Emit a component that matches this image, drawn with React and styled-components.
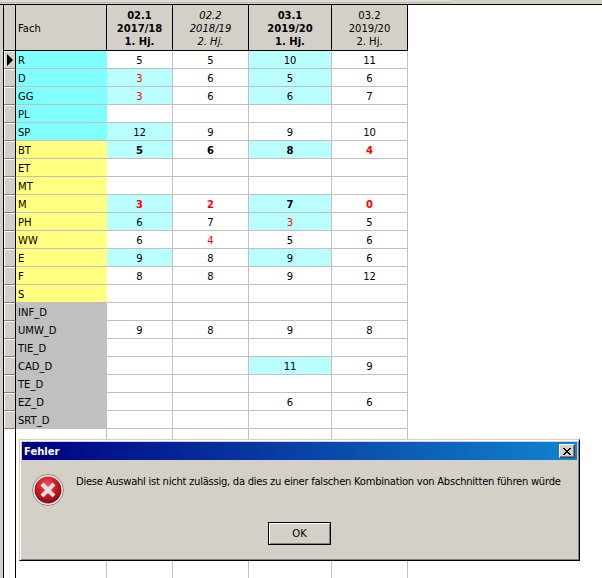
import React from 'react';
import styled, { createGlobalStyle, css } from 'styled-components';

const COLUMNS = '12px 91px 66px 76px 83px 76px';

const HEADERS = [
  { lines: ['02.1', '2017/18', '1. Hj.'], look: 'bold' },
  { lines: ['02.2', '2018/19', '2. Hj.'], look: 'italic' },
  { lines: ['03.1', '2019/20', '1. Hj.'], look: 'bold' },
  { lines: ['03.2', '2019/20', '2. Hj.'], look: 'plain' },
];

// v: value, h: highlighted, r: red, b: bold
const ROWS = [
  { name: 'R', group: 'cyan', cells: [{ v: 5 }, { v: 5 }, { v: 10, h: 1 }, { v: 11 }] },
  { name: 'D', group: 'cyan', cells: [{ v: 3, h: 1, r: 1 }, { v: 6 }, { v: 5, h: 1 }, { v: 6 }] },
  { name: 'GG', group: 'cyan', cells: [{ v: 3, h: 1, r: 1 }, { v: 6 }, { v: 6, h: 1 }, { v: 7 }] },
  { name: 'PL', group: 'cyan', cells: [{}, {}, {}, {}] },
  { name: 'SP', group: 'cyan', cells: [{ v: 12, h: 1 }, { v: 9 }, { v: 9 }, { v: 10 }] },
  { name: 'BT', group: 'yellow', cells: [{ v: 5, h: 1, b: 1 }, { v: 6, b: 1 }, { v: 8, h: 1, b: 1 }, { v: 4, r: 1, b: 1 }] },
  { name: 'ET', group: 'yellow', cells: [{}, {}, {}, {}] },
  { name: 'MT', group: 'yellow', cells: [{}, {}, {}, {}] },
  { name: 'M', group: 'yellow', cells: [{ v: 3, h: 1, r: 1, b: 1 }, { v: 2, r: 1, b: 1 }, { v: 7, h: 1, b: 1 }, { v: 0, r: 1, b: 1 }] },
  { name: 'PH', group: 'yellow', cells: [{ v: 6, h: 1 }, { v: 7 }, { v: 3, h: 1, r: 1 }, { v: 5 }] },
  { name: 'WW', group: 'yellow', cells: [{ v: 6 }, { v: 4, r: 1 }, { v: 5 }, { v: 6 }] },
  { name: 'E', group: 'yellow', cells: [{ v: 9, h: 1 }, { v: 8 }, { v: 9, h: 1 }, { v: 6 }] },
  { name: 'F', group: 'yellow', cells: [{ v: 8 }, { v: 8 }, { v: 9 }, { v: 12 }] },
  { name: 'S', group: 'yellow', cells: [{}, {}, {}, {}] },
  { name: 'INF_D', group: 'gray', cells: [{}, {}, {}, {}] },
  { name: 'UMW_D', group: 'gray', cells: [{ v: 9 }, { v: 8 }, { v: 9 }, { v: 8 }] },
  { name: 'TIE_D', group: 'gray', cells: [{}, {}, {}, {}] },
  { name: 'CAD_D', group: 'gray', cells: [{}, {}, { v: 11, h: 1 }, { v: 9 }] },
  { name: 'TE_D', group: 'gray', cells: [{}, {}, {}, {}] },
  { name: 'EZ_D', group: 'gray', cells: [{}, {}, { v: 6 }, { v: 6 }] },
  { name: 'SRT_D', group: 'gray', cells: [{}, {}, {}, {}] },
];

const GROUP_COLORS = { cyan: '#80ffff', yellow: '#ffff80', gray: '#c0c0c0' };

const ErrorIcon = () => (
  <svg width="32" height="32" viewBox="0 0 32 32">
    <defs>
      <radialGradient id="redBall" cx="45%" cy="30%" r="75%">
        <stop offset="0%" stopColor="#e8555c" />
        <stop offset="55%" stopColor="#c4161f" />
        <stop offset="100%" stopColor="#7d0a10" />
      </radialGradient>
    </defs>
    <circle cx="16" cy="16" r="15.5" fill="#f4f2f0" stroke="#8a8684" />
    <circle cx="16" cy="16" r="13.5" fill="url(#redBall)" />
    <path d="M10 10 L22 22 M22 10 L10 22" stroke="#ecdcdc" strokeWidth="4.2" strokeLinecap="butt" />
  </svg>
);

const App = () => {
  return (
    <Page>
      <GlobalStyle />
      <TopStrip>
        <TopTab />
      </TopStrip>
      <Frame>
        <Table>
          <HeaderRow>
            <HeaderCorner />
            <FachHeader>Fach</FachHeader>
            {HEADERS.map((header) => (
              <HeaderCell key={header.lines[0]} $look={header.look}>
                {header.lines.map((line) => (
                  <span key={line}>{line}</span>
                ))}
              </HeaderCell>
            ))}
          </HeaderRow>
          {ROWS.map((row, index) => (
            <Row key={row.name}>
              <Indicator>{index === 0 && <Arrow />}</Indicator>
              <NameCell $group={row.group}>{row.name}</NameCell>
              {row.cells.map((cell, i) => (
                <ValueCell key={i} $h={cell.h} $r={cell.r} $b={cell.b}>
                  {cell.v}
                </ValueCell>
              ))}
            </Row>
          ))}
          <FillerRow>
            <FillerCell $dark />
            <FillerCell />
            <FillerCell />
            <FillerCell />
            <FillerCell />
            <FillerCell />
          </FillerRow>
        </Table>
      </Frame>
      <Dialog>
        <TitleBar>
          <Title>Fehler</Title>
          <CloseButton>
            <svg width="8" height="7" viewBox="0 0 8 7">
              <path d="M0 0h2v1h1v1h2V1h1V0h2v1H7v1H6v1H5v1h1v1h1v1h1v1H6V6H5V5H3v1H2v1H0V6h1V5h1V4h1V3H2V2H1V1H0z" fill="#000" />
            </svg>
          </CloseButton>
        </TitleBar>
        <DialogBody>
          <Message>
            <ErrorIcon />
            <MessageText>
              Diese Auswahl ist nicht zulässig, da dies zu einer falschen Kombination von Abschnitten führen würde
            </MessageText>
          </Message>
          <OkButton>OK</OkButton>
        </DialogBody>
      </Dialog>
    </Page>
  );
};

export default App;

const GlobalStyle = createGlobalStyle`
  html, body {
    margin: 0;
    padding: 0;
    background: #ffffff;
  }
`;

const Page = styled.div`
  position: relative;
  width: 602px;
  height: 578px;
  display: flex;
  flex-direction: column;
  overflow: hidden;
  background: #d4d0c8;
  font-family: 'DejaVu Sans', sans-serif;
  font-size: 10px;
  color: #000000;
`;

const TopStrip = styled.div`
  height: 4px;
  border-bottom: 1px solid #000000;
`;

const TopTab = styled.div`
  width: 452px;
  height: 2px;
  background: #dedbd5;
  border-bottom: 1px solid #b9b6ae;
  border-radius: 0 0 3px 0;
`;

const Frame = styled.div`
  flex: 1;
  display: flex;
  min-height: 0;
  margin-left: 3px;
  border-left: 1px solid #000000;
  background: #ffffff;
`;

const Table = styled.div`
  width: 404px;
  display: flex;
  flex-direction: column;
`;

const HeaderRow = styled.div`
  display: grid;
  grid-template-columns: ${COLUMNS};
  height: 46px;
`;

const headerBase = css`
  box-sizing: border-box;
  background: #d4d0c8;
  border-right: 1px solid #000000;
  border-bottom: 1px solid #000000;
`;

const HeaderCorner = styled.div`
  ${headerBase}
`;

const FachHeader = styled.div`
  ${headerBase}
  display: flex;
  align-items: center;
  padding: 2px 0 0 2px;
`;

const HeaderCell = styled.div`
  ${headerBase}
  display: flex;
  flex-direction: column;
  align-items: center;
  justify-content: center;
  padding-top: 2px;
  line-height: 13px;
  font-weight: ${(props) => (props.$look === 'bold' ? 700 : 400)};
  font-style: ${(props) => (props.$look === 'italic' ? 'italic' : 'normal')};
`;

const Row = styled.div`
  display: grid;
  grid-template-columns: ${COLUMNS};
  height: 18px;
`;

const Indicator = styled.div`
  position: relative;
  box-sizing: border-box;
  background: #d4d0c8;
  border-right: 1px solid #000000;
  border-bottom: 1px solid #808080;
  box-shadow: inset 1px 1px 0 #ffffff;
`;

const Arrow = styled.div`
  position: absolute;
  left: 3px;
  top: 3px;
  width: 0;
  height: 0;
  border-left: 6px solid #000000;
  border-top: 6px solid transparent;
  border-bottom: 6px solid transparent;
`;

const NameCell = styled.div`
  box-sizing: border-box;
  display: flex;
  align-items: center;
  padding: 2px 0 0 2px;
  background: ${(props) => GROUP_COLORS[props.$group]};
  border-bottom: 1px solid #c0c0c0;
  border-right: 1px solid ${(props) => GROUP_COLORS[props.$group]};
`;

const ValueCell = styled.div`
  box-sizing: border-box;
  display: flex;
  align-items: center;
  justify-content: center;
  padding-top: 2px;
  background: ${(props) => (props.$h ? '#b9ffff' : '#ffffff')};
  border-right: 1px solid #c0c0c0;
  border-bottom: 1px solid #c0c0c0;
  color: ${(props) => (props.$r ? '#ff0000' : '#000000')};
  font-weight: ${(props) => (props.$b ? 700 : 400)};
`;

const FillerRow = styled.div`
  flex: 1;
  display: grid;
  grid-template-columns: ${COLUMNS};
`;

const FillerCell = styled.div`
  border-right: 1px solid ${(props) => (props.$dark ? '#000000' : '#c0c0c0')};
`;

const Dialog = styled.div`
  position: absolute;
  left: 19px;
  top: 439px;
  box-sizing: border-box;
  width: 561px;
  height: 122px;
  display: flex;
  flex-direction: column;
  padding: 2px;
  background: #d4d0c8;
  border: 1px solid;
  border-color: #d4d0c8 #000000 #000000 #d4d0c8;
  box-shadow: inset 1px 1px 0 #ffffff, inset -1px -1px 0 #808080;
`;

const TitleBar = styled.div`
  height: 18px;
  flex: none;
  display: flex;
  align-items: center;
  justify-content: space-between;
  padding: 0 2px;
  background: linear-gradient(to right, #000080, #1084d0);
`;

const Title = styled.span`
  color: #ffffff;
  font-weight: 700;
  font-size: 10px;
`;

const CloseButton = styled.div`
  box-sizing: border-box;
  width: 16px;
  height: 14px;
  display: flex;
  align-items: center;
  justify-content: center;
  background: #d4d0c8;
  border: 1px solid;
  border-color: #ffffff #404040 #404040 #ffffff;
  box-shadow: inset -1px -1px 0 #808080;
`;

const DialogBody = styled.div`
  flex: 1;
  display: flex;
  flex-direction: column;
  align-items: center;
  padding-top: 14px;
`;

const Message = styled.div`
  align-self: flex-start;
  display: flex;
  gap: 12px;
  padding-left: 10px;
`;

const MessageText = styled.div`
  margin-top: 1px;
  line-height: 14px;
  letter-spacing: -0.26px;
  white-space: nowrap;
`;

const OkButton = styled.div`
  box-sizing: border-box;
  width: 63px;
  height: 23px;
  margin-top: 16px;
  display: flex;
  align-items: center;
  justify-content: center;
  background: #d4d0c8;
  border: 1px solid #000000;
  box-shadow: inset 1px 1px 0 #ffffff, inset -1px -1px 0 #808080;
`;
